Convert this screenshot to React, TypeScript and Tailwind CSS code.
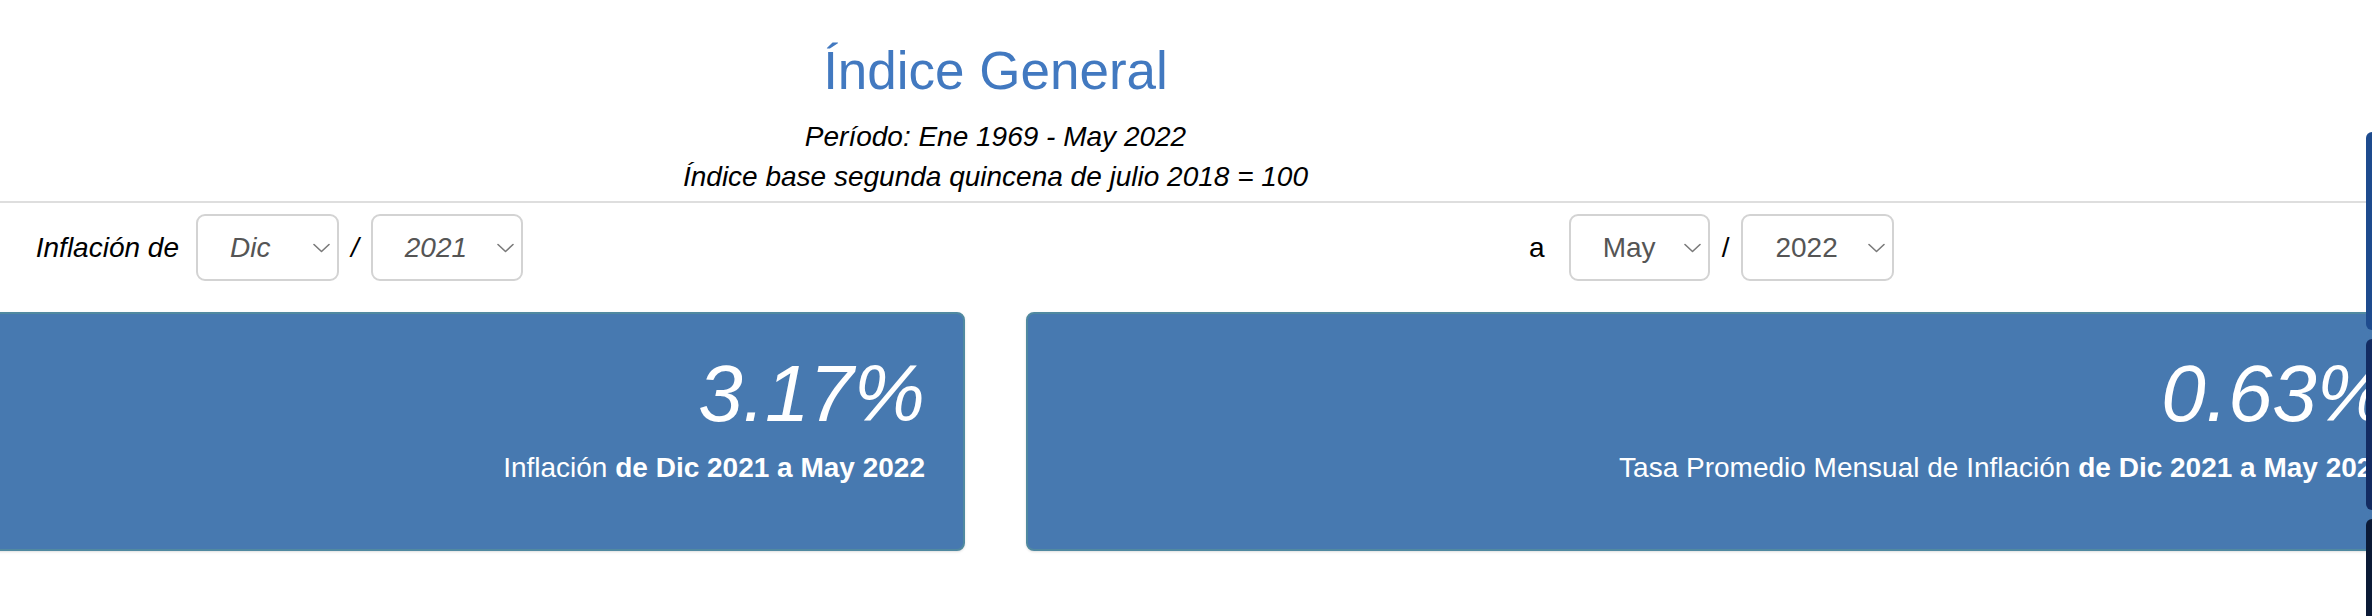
import React from 'react';

const Chevron: React.FC = () => (
  <svg width="17" height="10" viewBox="0 0 17 10" fill="none" className="shrink-0">
    <path d="M1 1.5 L8.5 8.5 L16 1.5" stroke="#7a7a7a" strokeWidth="1.6" strokeLinecap="round" strokeLinejoin="round" />
  </svg>
);

const Select: React.FC<{ value: string; width: string; italic?: boolean }> = ({ value, width, italic }) => (
  <div
    className={`${width} h-[67px] flex items-center justify-between pl-[32px] pr-[7px] border-2 border-[#d3d3d3] rounded-[9px] bg-white text-[28px] text-[#555] ${
      italic ? 'italic' : ''
    }`}
  >
    <span>{value}</span>
    <Chevron />
  </div>
);

const App: React.FC = () => {
  const cards = [
    { value: '3.17%', label: 'Inflación ', bold: 'de Dic 2021 a May 2022' },
    { value: '0.63%', label: 'Tasa Promedio Mensual de Inflación ', bold: 'de Dic 2021 a May 2022' }
  ];

  return (
    <div className="relative w-full h-[616px] overflow-hidden bg-white font-['Liberation_Sans',Arial,sans-serif] text-black">
      <div className="w-[2865px] ml-[-437px]">
        {/* Header */}
        <h1 className="pt-[40px] mb-[15px] text-center text-[53px] leading-[62px] font-normal text-[#4279c0]">
          Índice General
        </h1>
        <p className="text-center italic text-[28px] leading-[40px]">Período: Ene 1969 - May 2022</p>
        <p className="text-center italic text-[28px] leading-[40px]">Índice base segunda quincena de julio 2018 = 100</p>

        <div className="mt-[4px] h-[2px] bg-[#dedede]" />

        {/* Selectors */}
        <div className="flex pt-[11px]">
          <div className="flex-1 flex items-center justify-center">
            <span className="italic text-[28px] mr-[17px]">Inflación de</span>
            <Select value="Dic" width="w-[143px]" italic />
            <span className="italic text-[28px] mx-[12px]">/</span>
            <Select value="2021" width="w-[152px]" italic />
          </div>
          <div className="flex-1 flex items-center justify-center">
            <span className="text-[28px] mr-[24px]">a</span>
            <Select value="May" width="w-[141px]" />
            <span className="text-[28px] mx-[12px]">/</span>
            <Select value="2022" width="w-[153px]" />
          </div>
        </div>

        {/* Cards */}
        <div className="grid grid-cols-2 gap-[61px] mt-[31px]">
          {cards.map((card) => (
            <div
              key={card.value}
              className="h-[239px] pt-[36px] pr-[38px] text-right text-white bg-[#4779b0] border-2 border-[#5089a0] rounded-[8px] shadow-sm"
            >
              <div className="italic text-[80px] leading-[88px]">{card.value}</div>
              <div className="mt-[10px] text-[28px] leading-[40px]">
                {card.label}
                <b>{card.bold}</b>
              </div>
            </div>
          ))}
        </div>
      </div>

      {/* side tabs peeking in from the right edge */}
      <div className="absolute top-[132px] right-0 w-[6px] flex flex-col gap-[9px]">
        <div className="h-[198px] bg-[#1e4b8e] rounded-l-[6px]" />
        <div className="h-[171px] bg-[#132b61] rounded-l-[6px]" />
        <div className="h-[120px] bg-[#0b1a36] rounded-l-[6px]" />
      </div>
    </div>
  );
};

export default App;
